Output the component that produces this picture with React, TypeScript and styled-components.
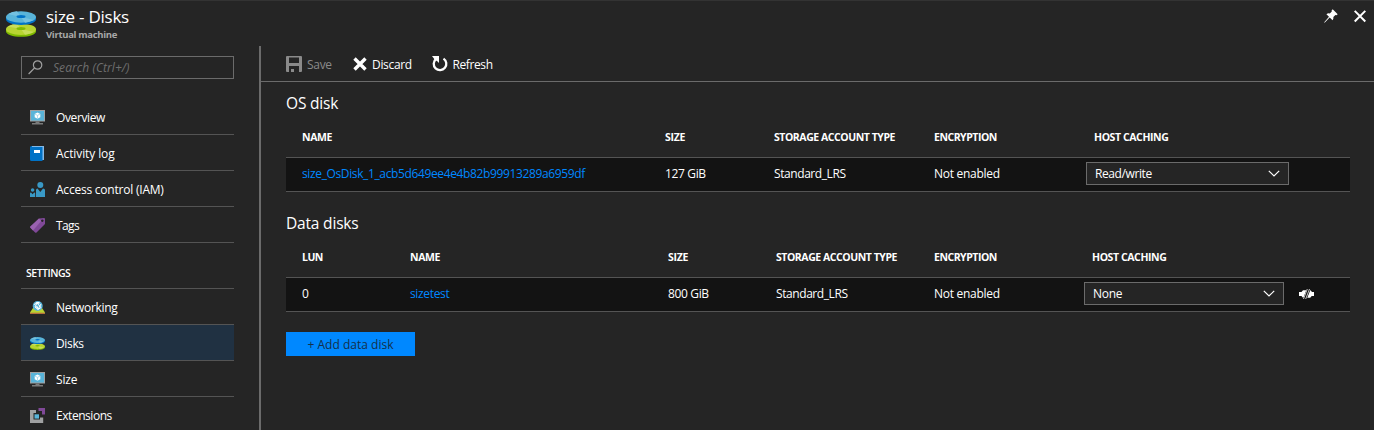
import React from 'react';
import styled, { createGlobalStyle, css } from 'styled-components';

const GlobalStyle = createGlobalStyle`
  * { box-sizing: border-box; }
  body {
    margin: 0;
    background: #252525;
    color: #fff;
    font-family: 'Open Sans', 'Noto Sans', sans-serif;
    font-size: 12px;
    overflow: hidden;
  }
`;

const Blade = styled.div`
  display: flex;
  flex-direction: column;
  width: 1374px;
  height: 430px;
  overflow: hidden;
  border-top: 1px solid #333;
`;

const Header = styled.header`
  display: flex;
  height: 45px;
  flex: none;
  padding: 0 8px 0 6px;
`;

const HeaderIcon = styled.div`
  width: 30px;
  margin: 10px 10px 0 0;
  svg { display: block; }
`;

const Titles = styled.div`
  flex: 1;
  padding-top: 5px;
`;

const Title = styled.h1`
  margin: 0;
  font-size: 17px;
  line-height: 22px;
  font-weight: 400;
  letter-spacing: -0.25px;
`;

const Subtitle = styled.div`
  margin-top: 1px;
  font-size: 9.5px;
  line-height: 12px;
  font-weight: 700;
  color: #a8a8a8;
  letter-spacing: -0.32px;
`;

const WindowActions = styled.div`
  display: flex;
  gap: 16px;
  padding-top: 8px;
  svg { display: block; }
`;

const Body = styled.div`
  display: flex;
  flex: 1;
  min-height: 0;
`;

const Sidebar = styled.nav`
  width: 259px;
  flex: none;
  padding: 10px 25px 0 21px;
`;

const SearchBox = styled.div`
  display: flex;
  align-items: center;
  height: 23px;
  border: 1px solid #6b6b6b;
  padding-left: 6px;
  gap: 10px;
  color: #6e6e6e;
  font-style: italic;
  letter-spacing: 0.06px;
  margin-bottom: 20px;
  svg { flex: none; }
`;

const NavItem = styled.div<{ $active?: boolean; $spacing: number }>`
  display: flex;
  align-items: center;
  height: 36px;
  padding: 1px 0 0 9px;
  gap: 11px;
  border-bottom: 1px solid #545454;
  background: ${p => (p.$active ? '#203142' : 'transparent')};
  letter-spacing: ${p => p.$spacing}px;
  white-space: nowrap;
  svg { flex: none; }
`;

const NavHeading = styled.div`
  height: 46px;
  padding: 22px 0 0 5px;
  border-bottom: 1px solid #545454;
  font-size: 10.5px;
  line-height: 16px;
  font-weight: 600;
  letter-spacing: -0.5px;
`;

const Main = styled.main`
  flex: 1;
  border-left: 2px solid #6b6b6b;
`;

const Toolbar = styled.div`
  display: flex;
  align-items: center;
  height: 36px;
  padding: 1px 0 0 25px;
  border-bottom: 1px solid #6b6b6b;
`;

const Command = styled.div<{ $width: number; $spacing: number; $gap: number; $disabled?: boolean }>`
  display: flex;
  align-items: center;
  width: ${p => p.$width}px;
  gap: ${p => p.$gap}px;
  letter-spacing: ${p => p.$spacing}px;
  color: ${p => (p.$disabled ? '#8a8a8a' : '#fff')};
  svg { flex: none; }
`;

const CommandLabel = styled.span`
  padding-top: 1px;
`;

const Content = styled.div`
  padding: 0 24px 0 25px;
`;

const SectionTitle = styled.h2<{ $top: number }>`
  margin: ${p => p.$top}px 0 0;
  font-size: 15.5px;
  line-height: 20px;
  font-weight: 400;
  letter-spacing: -0.18px;
`;

const columns = css<{ $columns: string }>`
  display: grid;
  grid-template-columns: ${p => p.$columns};
  padding-left: 16px;
`;

const HeadRow = styled.div<{ $columns: string }>`
  ${columns}
  margin-top: 16px;
  height: 28px;
  font-size: 10.5px;
  line-height: 16px;
  font-weight: 700;
`;

const HeadCell = styled.div<{ $spacing: number; $indent?: boolean }>`
  letter-spacing: ${p => p.$spacing}px;
  padding-left: ${p => (p.$indent ? 8 : 0)}px;
  white-space: nowrap;
`;

const DataRow = styled.div<{ $columns: string }>`
  ${columns}
  height: 35px;
  align-items: center;
  background: #131313;
  border-top: 1px solid #545454;
  border-bottom: 1px solid #545454;
`;

const Cell = styled.div<{ $spacing: number; $link?: boolean }>`
  letter-spacing: ${p => p.$spacing}px;
  color: ${p => (p.$link ? '#0088ff' : '#fff')};
  padding-bottom: 3px;
  white-space: nowrap;
`;

const Select = styled.div<{ $width: number; $spacing: number }>`
  display: flex;
  align-items: center;
  justify-content: space-between;
  width: ${p => p.$width}px;
  height: 23px;
  margin-bottom: 2px;
  padding: 0 8px;
  border: 1px solid #6b6b6b;
  background: #252525;
  letter-spacing: ${p => p.$spacing}px;
`;

const DetachAction = styled.div`
  padding-bottom: 2px;
  svg { display: block; }
`;

const AddButton = styled.button`
  display: block;
  width: 129px;
  height: 24px;
  margin-top: 20px;
  padding: 1px 0 0;
  border: 0;
  background: #0088ff;
  color: #14304c;
  font: inherit;
  letter-spacing: 0.02px;
`;

const DisksIcon = ({ width, height }: { width: number; height: number }) => (
  <svg width={width} height={height} viewBox="0 0 30 26">
    <path d="M0 18.500v2c0 3 6.700 5.300 15 5.300s15-2.300 15-5.300v-2z" fill="#7fba00" />
    <ellipse cx="15" cy="18.300" rx="15" ry="5.600" fill="#b8d432" />
    <path d="M15 18 2 15.500q4-2.500 9-2.800zM15 18l13 3q-4 2.300-9 2.700z" fill="#c8dd5a" />
    <ellipse cx="15" cy="17.600" rx="4.500" ry="1.500" fill="#7fba00" />
    <path d="M0 6v2.500c0 3 6.700 5.400 15 5.400s15-2.400 15-5.400V6z" fill="#0072c6" />
    <ellipse cx="15" cy="6" rx="15" ry="5.800" fill="#59b4d9" />
    <path d="M15 6 2 3Q6 .600 11 .300zM15 6l13 3q-4 2.300-9 2.700z" fill="#74c1e0" />
    <ellipse cx="15" cy="5.500" rx="4.500" ry="1.500" fill="#0072c6" />
  </svg>
);

const MonitorIcon = () => (
  <svg width="15" height="15" viewBox="0 0 15 15">
    <path d="M0 0h15v11.500H0z" fill="#a0a1a2" />
    <path d="M1 1h13v9.500H1z" fill="#59b4d9" />
    <path d="M5.500 11.500h4V13H13v1.500H2V13h3.500z" fill="#7a7a7a" />
    <path d="m7.500 2.600 2.800 1.300v3.400L7.500 8.800 4.700 7.300V3.900z" fill="#fff" />
    <path d="m4.800 4 2.700 1.400L10.200 4M7.500 5.400v3.200" stroke="#8fcde6" strokeWidth=".7" fill="none" />
  </svg>
);

const LogIcon = () => (
  <svg width="15" height="15" viewBox="0 0 15 15">
    <path d="M2 0h12v14H2z" fill="#83b9e8" />
    <path d="M0 1.500Q0 0 1.500 0H2v1h10.500v14H1.500Q0 15 0 13.500z" fill="#0072c6" />
    <path d="M4 4h6v3H4z" fill="#fff" />
  </svg>
);

const PeopleIcon = () => (
  <svg width="15" height="15" viewBox="0 0 15 15" fill="#3999c6">
    <circle cx="10.300" cy="3" r="3" />
    <circle cx="2.600" cy="8" r="1.800" />
    <path d="M6 15V8q0-1.500 1.500-1.500L10.300 10 13 6.500q2 0 2 1.500v7zM0 15v-3.500q0-1 1-1l1.600 1.700 1.600-1.700q1 0 1 1V15z" />
  </svg>
);

const TagIcon = () => (
  <svg width="15" height="15" viewBox="0 0 15 15">
    <path fillRule="evenodd" d="M9 .500 14 0q1 0 1 1v5L6.500 14.500q-.700.600-1.400 0L.400 9.800q-.600-.700 0-1.400zM12.300 1.500a1.200 1.200 0 1 0 .01 0z" fill="#804998" />
    <path d="M9 .500.400 8.400q-.600.700 0 1.400L3 12.400 11.200 3z" fill="#9a62b0" />
  </svg>
);

const NetworkIcon = () => (
  <svg width="15" height="15" viewBox="0 0 15 15">
    <path d="m3 8-3 4.500V14h15v-1.500L12 8z" fill="#b8d432" />
    <path d="M0 12.700h15V14H0z" fill="#b5703a" />
    <circle cx="7.700" cy="6" r="5" fill="#59b4d9" />
    <path d="M4 4.500 7 3l4 4.500-3 2L5 7l2-4M8 9.500 11 4" stroke="#fff" strokeWidth="1" fill="none" />
    <path d="M5.500 2h4v1.700h-2zM5.800 6.500l1.500-.5 1 2-1 1z" fill="#fff" />
  </svg>
);

const ExtensionIcon = () => (
  <svg width="15" height="15" viewBox="0 0 15 15">
    <path d="M0 2h6v3H3.500v6.500H10V9.500h3.200V15H0z" fill="#a0a1a2" />
    <path d="M8.500 0H15v6.500h-3V3H8.500z" fill="#804998" />
    <path d="M4.500 6.300h4.500v4.300H4.500z" fill="#59b4d9" />
  </svg>
);

const SearchIcon = () => (
  <svg width="15" height="15" viewBox="0 0 15 15" fill="none" stroke="#a0a0a0" strokeWidth="1.200">
    <circle cx="9.600" cy="5" r="4.200" />
    <path d="M6.500 8 .600 14" />
  </svg>
);

const SaveIcon = () => (
  <svg width="16" height="16" viewBox="0 0 16 16">
    <path fillRule="evenodd" d="M0 1q0-1 1-1h14q1 0 1 1v14q0 1-1 1H1q-1 0-1-1zM3 1.500v5.500h10V1.500zM3 10v6h2v-3h3v3h5v-6z" fill="#8a8a8a" />
  </svg>
);

const DiscardIcon = () => (
  <svg width="14" height="14" viewBox="0 0 14 14">
    <path d="m1.500 1.500 11 11M12.500 1.500l-11 11" stroke="#fff" strokeWidth="3.400" />
  </svg>
);

const RefreshIcon = () => (
  <svg width="16" height="16" viewBox="0 0 16 16">
    <path d="M11.500 2.600a6.300 6.300 0 1 1-7.500.400" fill="none" stroke="#fff" strokeWidth="2.300" />
    <path d="M0 0h7v7L5 5 3 4z" fill="#fff" />
  </svg>
);

const PinIcon = () => (
  <svg width="14" height="14" viewBox="0 0 14 14">
    <path d="m8.700.300 5 5-1.300 1-1-.200-2 2q.300 2-.800 3.200L5.700 8.500.600 13.700l-.400-.400L5 7.800 2.400 5.200Q4 4 5.800 4.500l2-2-.200-1z" fill="#fff" />
  </svg>
);

const CloseIcon = () => (
  <svg width="12" height="14" viewBox="0 0 12 14">
    <path d="m.700 1.900 10.600 10.600M11.300 1.900.700 12.500" stroke="#fff" strokeWidth="2" />
  </svg>
);

const ChevronIcon = () => (
  <svg width="12" height="7" viewBox="0 0 12 7">
    <path d="m.800.800 5.200 5.200L11.200.800" stroke="#fff" strokeWidth="1.200" fill="none" />
  </svg>
);

const DetachIcon = () => (
  <svg width="15" height="10" viewBox="0 0 15 10">
    <path d="M0 3h2.500L4 1.300h3.300L4.500 8.500H3.700L2.500 7H0zM15 3h-2l-1.500-1.700h-.3L8.300 8.700h2.900L12.700 7H15z" fill="#fff" />
    <path d="M8.800 0 5 10M10.300 0 6.500 10" stroke="#131313" strokeWidth="1.500" />
    <path d="M8.300 0 4.500 10M10.500 0 6.700 10" stroke="#fff" strokeWidth=".75" />
  </svg>
);

const smallDisks = <DisksIcon width={15} height={13} />;

const generalItems = [
  { label: 'Overview', icon: <MonitorIcon />, spacing: -0.38 },
  { label: 'Activity log', icon: <LogIcon />, spacing: -0.1 },
  { label: 'Access control (IAM)', icon: <PeopleIcon />, spacing: -0.22 },
  { label: 'Tags', icon: <TagIcon />, spacing: -0.6 },
];

const settingsItems = [
  { label: 'Networking', icon: <NetworkIcon />, spacing: -0.32 },
  { label: 'Disks', icon: smallDisks, spacing: -0.35, active: true },
  { label: 'Size', icon: <MonitorIcon />, spacing: -0.2 },
  { label: 'Extensions', icon: <ExtensionIcon />, spacing: -0.45 },
];

const osColumns = '363px 109px 160px 152px 1fr';
const dataColumns = '108px 258px 108px 158px 150px 215px 1fr';

export default function App() {
  return (
    <>
      <GlobalStyle />
      <Blade>
        <Header>
          <HeaderIcon><DisksIcon width={30} height={26} /></HeaderIcon>
          <Titles>
            <Title>size - Disks</Title>
            <Subtitle>Virtual machine</Subtitle>
          </Titles>
          <WindowActions>
            <PinIcon />
            <CloseIcon />
          </WindowActions>
        </Header>
        <Body>
          <Sidebar>
            <SearchBox><SearchIcon />Search (Ctrl+/)</SearchBox>
            {generalItems.map(i => (
              <NavItem key={i.label} $spacing={i.spacing}>{i.icon}{i.label}</NavItem>
            ))}
            <NavHeading>SETTINGS</NavHeading>
            {settingsItems.map(i => (
              <NavItem key={i.label} $spacing={i.spacing} $active={i.active}>{i.icon}{i.label}</NavItem>
            ))}
          </Sidebar>
          <Main>
            <Toolbar>
              <Command $width={67} $gap={5} $spacing={-0.3} $disabled><SaveIcon /><CommandLabel>Save</CommandLabel></Command>
              <Command $width={79} $gap={5} $spacing={-0.32}><DiscardIcon /><CommandLabel>Discard</CommandLabel></Command>
              <Command $width={80} $gap={4.5} $spacing={-0.4}><RefreshIcon /><CommandLabel>Refresh</CommandLabel></Command>
            </Toolbar>
            <Content>
              <SectionTitle $top={11}>OS disk</SectionTitle>
              <HeadRow $columns={osColumns}>
                <HeadCell $spacing={-0.4}>NAME</HeadCell>
                <HeadCell $spacing={-0.3}>SIZE</HeadCell>
                <HeadCell $spacing={-0.45}>STORAGE ACCOUNT TYPE</HeadCell>
                <HeadCell $spacing={-0.48}>ENCRYPTION</HeadCell>
                <HeadCell $spacing={-0.4} $indent>HOST CACHING</HeadCell>
              </HeadRow>
              <DataRow $columns={osColumns}>
                <Cell $spacing={-0.37} $link>size_OsDisk_1_acb5d649ee4e4b82b99913289a6959df</Cell>
                <Cell $spacing={-0.35}>127 GiB</Cell>
                <Cell $spacing={-0.42}>Standard_LRS</Cell>
                <Cell $spacing={-0.28}>Not enabled</Cell>
                <Select $width={203} $spacing={-0.4}>Read/write<ChevronIcon /></Select>
              </DataRow>
              <SectionTitle $top={21}>Data disks</SectionTitle>
              <HeadRow $columns={dataColumns}>
                <HeadCell $spacing={-0.5}>LUN</HeadCell>
                <HeadCell $spacing={-0.4}>NAME</HeadCell>
                <HeadCell $spacing={-0.3}>SIZE</HeadCell>
                <HeadCell $spacing={-0.45}>STORAGE ACCOUNT TYPE</HeadCell>
                <HeadCell $spacing={-0.48}>ENCRYPTION</HeadCell>
                <HeadCell $spacing={-0.4} $indent>HOST CACHING</HeadCell>
              </HeadRow>
              <DataRow $columns={dataColumns}>
                <Cell $spacing={-0.3}>0</Cell>
                <Cell $spacing={-0.35} $link>sizetest</Cell>
                <Cell $spacing={-0.35}>800 GiB</Cell>
                <Cell $spacing={-0.42}>Standard_LRS</Cell>
                <Cell $spacing={-0.28}>Not enabled</Cell>
                <Select $width={200} $spacing={-0.3}>None<ChevronIcon /></Select>
                <DetachAction><DetachIcon /></DetachAction>
              </DataRow>
              <AddButton>+ Add data disk</AddButton>
            </Content>
          </Main>
        </Body>
      </Blade>
    </>
  );
}
